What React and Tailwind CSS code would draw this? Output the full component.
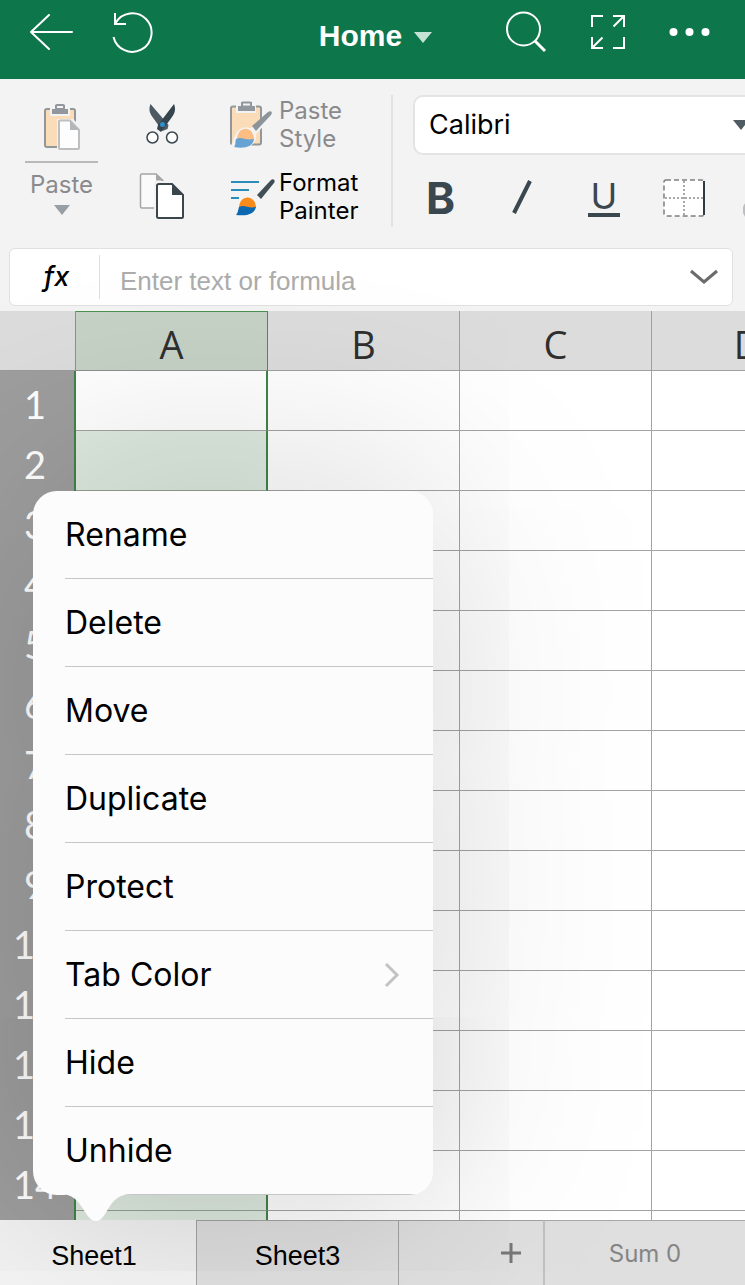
const columns = ['A', 'B', 'C', 'D'];
const rows = Array.from({ length: 15 }, (_, i) => i + 1);

const menuItems = [
  { label: 'Rename' },
  { label: 'Delete' },
  { label: 'Move' },
  { label: 'Duplicate' },
  { label: 'Protect' },
  { label: 'Tab Color', submenu: true },
  { label: 'Hide' },
  { label: 'Unhide' },
];

function Triangle({ className }) {
  return (
    <svg viewBox="0 0 18 11" className={className} fill="currentColor" aria-hidden="true">
      <path d="M0 0h18L9 11z" />
    </svg>
  );
}

function BackIcon() {
  return (
    <svg width="43" height="38" viewBox="30 13 43 38" fill="none" stroke="currentColor" strokeWidth="2" strokeLinecap="round" strokeLinejoin="round">
      <path d="M72 32H31M49 15 31 32l18 17" />
    </svg>
  );
}

function UndoIcon() {
  return (
    <svg width="42" height="42" viewBox="112 10 42 42" fill="none" stroke="currentColor" strokeWidth="2">
      <path d="M113.500 36A19.300 19.300 0 1 0 115.500 22" />
      <path d="M115 12v11h11" />
    </svg>
  );
}

function SearchIcon() {
  return (
    <svg width="42" height="42" viewBox="504 10 42 42" fill="none" stroke="currentColor">
      <circle cx="522.500" cy="28" r="16.500" strokeWidth="2" />
      <path d="m534 40 10 10" strokeWidth="3" />
    </svg>
  );
}

function ExpandIcon() {
  return (
    <svg width="36" height="36" viewBox="589 13 36 36" fill="none" stroke="currentColor" strokeWidth="2">
      <path d="M591 26V15h11M612 15h11v11M623 36v11h-11M602 47h-11V36M623 15l-10.500 10.500M591 47l10.500-10.500" />
    </svg>
  );
}

function DotsIcon() {
  return (
    <svg width="41" height="10" viewBox="0 0 41 10" fill="currentColor">
      <circle cx="4.500" cy="5" r="4" />
      <circle cx="20.500" cy="5" r="4" />
      <circle cx="36.500" cy="5" r="4" />
    </svg>
  );
}

function PasteIcon() {
  return (
    <svg width="40" height="48" viewBox="44 103 40 48" fill="none">
      <rect x="47" y="109" width="30" height="38" rx="2" fill="#fbdcb8" stroke="#92979a" strokeWidth="2" />
      <path d="M52 107h20v9H52z" fill="#f3f3f3" />
      <path d="M54 109h3v-4h10v4h3v5H54z" fill="#92979d" />
      <rect x="58" y="105" width="8" height="4" rx="1" fill="#f3f3f3" stroke="#92979d" strokeWidth="2" />
      <path d="M59 119h16l9 9v23H59z" fill="#f3f3f3" />
      <path d="M62 120.500h10l9 9.500v18q0 1-1 1H62q-1 0-1-1v-26.500q0-1 1-1z" fill="#fdfdfd" stroke="#bcbec0" strokeWidth="2" />
      <path d="M72 120.500v9.500h9z" fill="#b4b7b9" />
    </svg>
  );
}

function CutIcon() {
  return (
    <svg width="34" height="42" viewBox="146 104 34 42" fill="none">
      <path d="M151.500 105c-2 5-1 9 2 13l10 14 5-2 1-4z" fill="#4d5a63" />
      <path d="M175 105c2 5 1 9-2 13l-11 15-4-3 1-4z" fill="#36444d" />
      <circle cx="163.500" cy="125.500" r="2.500" fill="#2f8fca" />
      <circle cx="153.500" cy="138.500" r="5.500" fill="#fdfdfd" stroke="#3b474f" strokeWidth="1.500" />
      <circle cx="173" cy="138.500" r="5.500" fill="#fdfdfd" stroke="#3b474f" strokeWidth="1.500" />
    </svg>
  );
}

function CopyIcon() {
  return (
    <svg width="46" height="48" viewBox="140 172 46 48" fill="none">
      <path d="M143 174h14l7 7v27h-21q-1.500 0-1.500-1.500v-31q0-1.500 1.500-1.500z" fill="#fafafa" stroke="#a3a5a6" strokeWidth="1.500" />
      <path d="M157 173.500v7h8z" fill="#a3a5a6" />
      <path d="M155 181h20l11 11v28h-31z" fill="#f3f3f3" />
      <path d="M160 184h13l11 11v21.500q0 1.500-1.500 1.500H160q-2 0-2-1.500v-31q0-1.500 2-1.500z" fill="#fff" stroke="#3a454c" strokeWidth="2" />
      <path d="M173 184v11h11z" fill="#3a454c" />
    </svg>
  );
}

function PasteStyleIcon() {
  return (
    <svg width="46" height="48" viewBox="229 101 46 48" fill="none">
      <rect x="231" y="106.500" width="30" height="38" rx="2" fill="#fbdcb8" stroke="#92979a" strokeWidth="2" />
      <path d="M236 104h20v9h-20z" fill="#f3f3f3" />
      <path d="M238 106h3v-4h11v4h3v5h-17z" fill="#92979d" />
      <rect x="242" y="102.500" width="9" height="4" rx="1" fill="#f3f3f3" stroke="#92979d" strokeWidth="2" />
      <path d="M229 148c5-4 4-16 13-20 4-1 7 0 9 0l19-18 5 4-19 20c1 8-5 14-14 14z" fill="#f3f3f3" />
      <path d="m252 126 16-14c3-2 5 0 3 3l-15 16z" fill="#8d9499" />
      <path d="M237 140c0-15 17-15 17 0z" fill="#fcbd83" />
      <path d="M236 139c6-3 9 2 18 0-1 8-10 10-20 8 2-2 1-5 2-8z" fill="#66a3d2" />
    </svg>
  );
}

function FormatPainterIcon() {
  return (
    <svg width="46" height="40" viewBox="229 177 46 40" fill="none">
      <path d="M231 182h28M231 190h18M231 198h8" stroke="#2c8cb9" strokeWidth="2" />
      <path d="m257 195 14-15c2-2 5 0 3 3l-13 16z" fill="#424e56" />
      <path d="M239 208c0-14 17-14 17 0z" fill="#f98b1c" />
      <path d="M239 207c6-3 9 2 17 0-2 8-10 9-20 8 2-2 2-5 3-8z" fill="#0c68b1" />
    </svg>
  );
}

function BordersIcon() {
  return (
    <svg width="43" height="40" viewBox="662 178 43 40" fill="none">
      <rect x="664" y="180" width="40" height="36" rx="2" fill="#fff" stroke="#7c7f81" strokeWidth="1.500" strokeDasharray="5 3" />
      <path d="M684 181v35M665 198h38" stroke="#8a8d8f" strokeWidth="1.500" strokeDasharray="2 2" />
      <path d="M704 181v34" stroke="#2f3b43" strokeWidth="2" />
    </svg>
  );
}

function TopBar() {
  return (
    <header className="grid h-[79px] shrink-0 grid-cols-[1fr_auto_1fr] items-center bg-[#0d764a] pr-6 pb-4 pl-[30px] text-white">
      <div className="flex items-center gap-[39px]">
        <button type="button" aria-label="Back"><BackIcon /></button>
        <button type="button" aria-label="Undo"><UndoIcon /></button>
      </div>
      <button type="button" className="flex items-center gap-3 pt-2 text-[30px] leading-8 font-bold">
        Home
        <Triangle className="mt-1 h-[11px] w-[18px] text-[#c5e3d5]" />
      </button>
      <div className="flex items-center justify-end gap-[43px] pr-[11px]">
        <button type="button" aria-label="Search"><SearchIcon /></button>
        <button type="button" aria-label="Full screen"><ExpandIcon /></button>
        <button type="button" aria-label="More"><DotsIcon /></button>
      </div>
    </header>
  );
}

function Ribbon() {
  return (
    <div className="flex h-[169px] shrink-0 items-start overflow-hidden pt-4 pl-[25px] font-[Inter,sans-serif] text-2xl leading-7">
      <button type="button" className="flex w-[73px] shrink-0 flex-col items-center pt-2 text-[#8a8a8c]">
        <PasteIcon />
        <span className="mt-[10px] mb-2 h-[2px] w-full bg-[#b9b9bb]" />
        Paste
        <Triangle className="mt-[6px] h-[10px] w-4 text-[#979ea4]" />
      </button>

      <div className="ml-[38px] flex w-[52px] shrink-0 flex-col items-center gap-[27px] pt-2">
        <button type="button" aria-label="Cut"><CutIcon /></button>
        <button type="button" aria-label="Copy"><CopyIcon /></button>
      </div>

      <div className="ml-[41px] flex w-[162px] shrink-0 flex-col gap-4 pt-[2px]">
        <button type="button" className="flex h-14 items-center gap-1 text-left text-[#8a8a8c]">
          <PasteStyleIcon />
          <span className="w-20">Paste Style</span>
        </button>
        <button type="button" className="flex h-14 items-center gap-1 text-left text-black">
          <FormatPainterIcon />
          <span className="w-20">Format Painter</span>
        </button>
      </div>

      <div className="h-[132px] w-[2px] shrink-0 bg-[#e2e2e3]" />

      <div className="ml-5 flex w-[420px] shrink-0 flex-col text-[#3b474f]">
        <div className="flex h-[60px] w-[350px] items-center rounded-[10px] border-2 border-[#e4e4e5] bg-white pr-3 pl-[14px]">
          <select aria-label="Font" className="flex-1 appearance-none bg-transparent text-[27px] leading-8 text-black outline-none">
            <option>Calibri</option>
          </select>
          <Triangle className="h-[10px] w-4 text-[#505c64]" />
        </div>
        <div className="mt-[23px] flex items-start pl-[13px]">
          <button type="button" aria-label="Bold" className="w-[82px] text-left text-[44px] leading-10 font-bold">B</button>
          <button type="button" aria-label="Italic" className="w-20">
            <svg width="22" height="40" viewBox="0 0 22 40" className="ml-1" fill="none" stroke="currentColor" strokeWidth="4">
              <path d="M2 35 18 3" />
            </svg>
          </button>
          <button type="button" aria-label="Underline" className="h-[39px] w-8 border-b-4 text-center text-4xl leading-8 font-normal">U</button>
          <button type="button" aria-label="Borders" className="ml-[42px]"><BordersIcon /></button>
          <button type="button" aria-label="Fill color" className="mt-6 ml-[38px] h-4 w-12 rounded-md bg-[#bdbdbf]" />
        </div>
      </div>
    </div>
  );
}

function FormulaBar() {
  return (
    <div className="mr-3 mb-[5px] ml-[9px] flex h-[58px] shrink-0 items-center rounded-md border border-[#e0e0e0] bg-white">
      <label htmlFor="formula" className="w-[89px] pl-1 text-center font-[Inter,sans-serif] text-[27px] leading-8 font-medium text-black italic">fx</label>
      <span className="h-[44px] w-px bg-[#dedede]" />
      <input id="formula" type="text" placeholder="Enter text or formula" className="ml-5 h-full min-w-0 flex-1 bg-transparent pt-2 text-[26px] text-black outline-none placeholder:text-[#acacac]" />
      <button type="button" aria-label="Expand formula bar" className="mr-[13px] text-[#6b6b6d]">
        <svg width="30" height="18" viewBox="0 0 30 18" fill="none" stroke="currentColor" strokeWidth="3">
          <path d="m2 3 13 11L28 3" />
        </svg>
      </button>
    </div>
  );
}

function Sheet() {
  return (
    <main className="min-h-0 flex-1 overflow-hidden bg-white">
      <table className="w-[844px] table-fixed border-separate border-spacing-0">
        <thead>
          <tr className="h-[60px] font-['Open_Sans',sans-serif] text-[38px] leading-10 text-[#2f2f2f]">
            <th className="w-[76px] border-r border-b border-r-[#8f8f8f] border-b-[#9b9b9b] bg-[#dcdcdc]" aria-label="Select all" />
            {columns.map((col) => (
              <th
                key={col}
                scope="col"
                className={
                  col === 'A'
                    ? 'w-[192px] border-t border-r border-b border-t-[#4b9150] border-r-[#4b9150] border-b-[#8f8f8f] bg-[#c6d2c6] p-0 pt-[6px] font-normal'
                    : 'w-[192px] border-r border-b border-[#a0a0a0] bg-[#dcdcdc] p-0 pt-[6px] font-normal'
                }
              >
                {col}
              </th>
            ))}
          </tr>
        </thead>
        <tbody>
          {rows.map((row) => (
            <tr key={row} className="h-[60px]">
              <th scope="row" className="border-r-2 border-[#428348] bg-[#9e9e9e] p-0 pr-1 pt-[6px] font-[Lato,sans-serif] text-[38px] leading-10 font-normal text-white">
                {row}
              </th>
              {columns.map((col) => (
                <td
                  key={col}
                  className={
                    col !== 'A'
                      ? 'border-r border-b border-[#a3a3a3] p-0'
                      : row === 1
                        ? 'border-r-2 border-b border-r-[#428348] border-b-[#a3a3a3] p-0'
                        : 'border-r-2 border-b border-r-[#428348] border-b-[#96a096] bg-[#deeadf] p-0'
                  }
                />
              ))}
            </tr>
          ))}
        </tbody>
      </table>
    </main>
  );
}

function SheetMenu() {
  return (
    <div className="absolute bottom-full left-[33px] mb-[25px] w-[400px] rounded-[24px] shadow-[0_0_220px_rgba(0,0,0,0.21)]">
      <div role="menu" className="overflow-hidden rounded-[24px] bg-[#fcfcfc] pl-8 font-[Inter,sans-serif] text-[32px] leading-10 text-black">
        {menuItems.map((item) => (
          <button
            key={item.label}
            type="button"
            role="menuitem"
            className="flex h-[88px] w-full items-center justify-between border-b border-[#c6c6c8] pr-[33px] text-left"
          >
            {item.label}
            {item.submenu && (
              <svg width="16" height="26" viewBox="0 0 16 26" fill="none" stroke="#c3c3c5" strokeWidth="3">
                <path d="m2 2 11 11L2 24" />
              </svg>
            )}
          </button>
        ))}
      </div>
      {/* callout tip pointing at the sheet tab */}
      <svg width="70" height="27" viewBox="0 0 70 27" className="absolute top-full left-7 -mt-px" fill="#fcfcfc" aria-hidden="true">
        <path d="M0 0C22 0 23 27 35 27S46 0 70 0z" />
      </svg>
    </div>
  );
}

function SheetTabs() {
  return (
    <footer className="relative flex h-[65px] shrink-0 bg-[#dfdfdf] text-[27px] leading-8 text-black">
      <button type="button" className="w-[196px] bg-[#f3f3f3] pr-2 pt-[6px]">Sheet1</button>
      <button type="button" className="w-[203px] border-x border-t border-[#a3a3a3] pt-[6px]">Sheet3</button>
      <button type="button" aria-label="Add sheet" className="flex w-[144px] items-center justify-end border-t border-t-[#a3a3a3] pr-[22px]">
        <svg width="20" height="20" viewBox="0 0 20 20" stroke="#777" strokeWidth="3">
          <path d="M10 0v20M0 10h20" />
        </svg>
      </button>
      <div className="flex flex-1 items-center justify-center border-t border-l-2 border-t-[#a8a8a8] border-l-[#c0c0c0] pt-[2px] font-[Inter,sans-serif] text-2xl text-[#858585]">
        Sum 0
      </div>
      <SheetMenu />
    </footer>
  );
}

export default function App() {
  return (
    <div className="flex h-screen flex-col overflow-hidden bg-[#f3f3f3] font-['Liberation_Sans',Arial,sans-serif]">
      <TopBar />
      <Ribbon />
      <FormulaBar />
      <Sheet />
      <SheetTabs />
    </div>
  );
}
